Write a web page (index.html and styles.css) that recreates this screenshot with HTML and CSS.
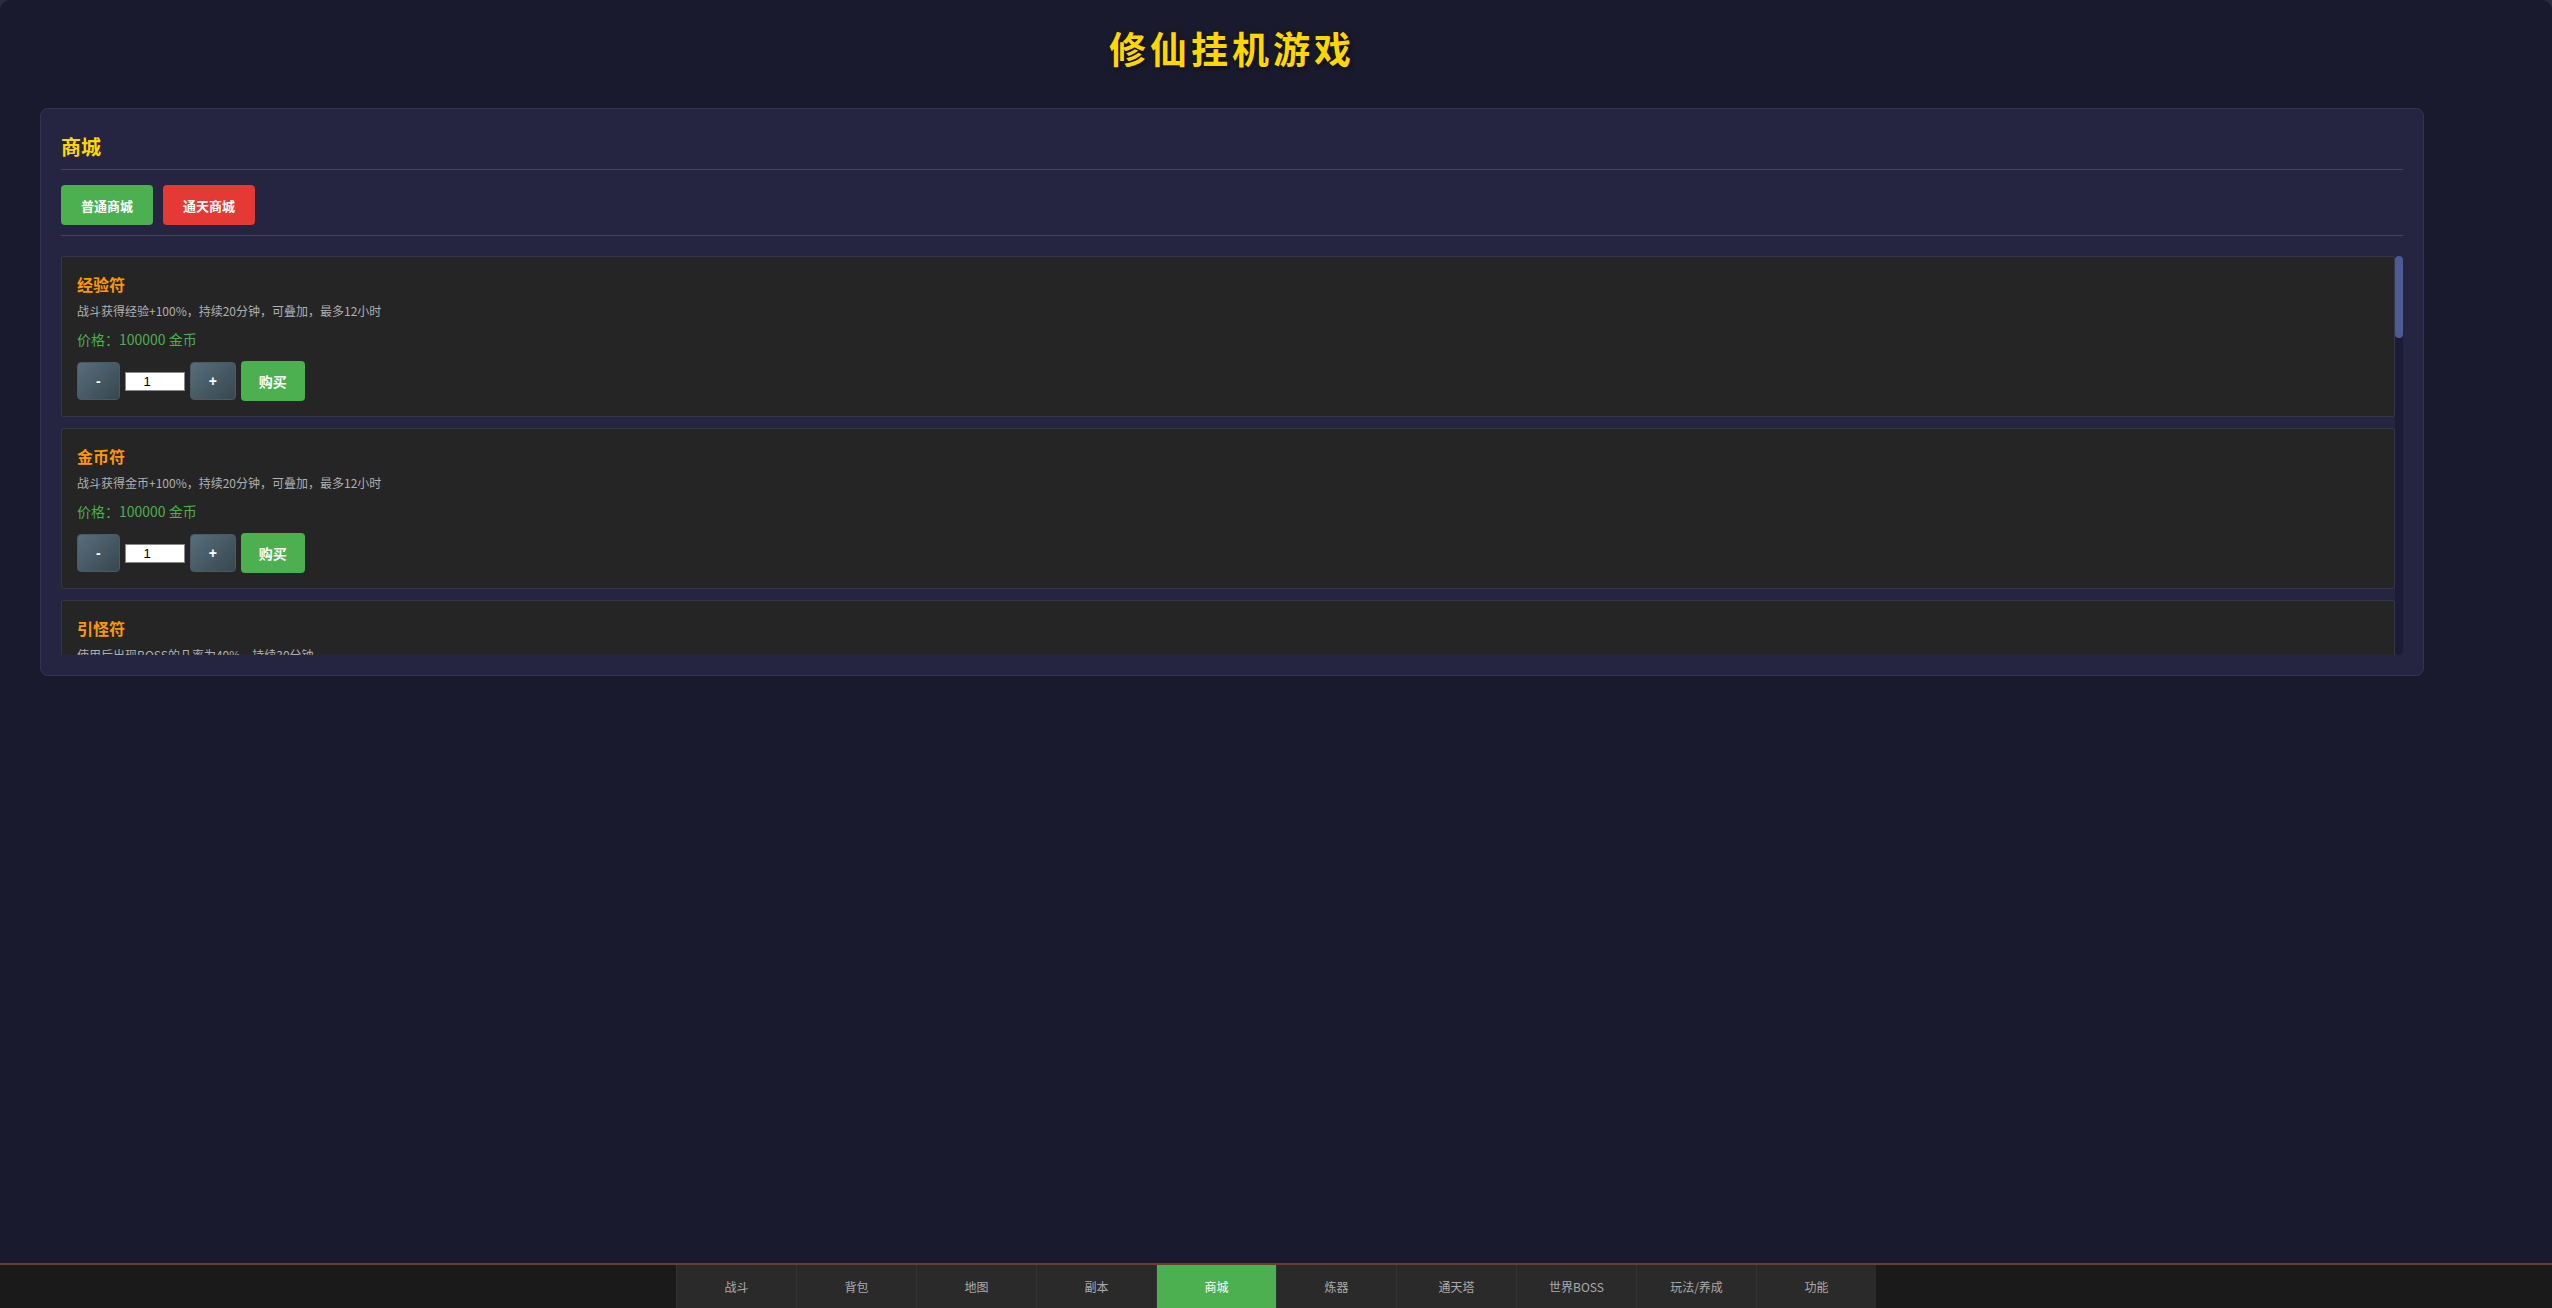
FILE: index.html
```html
<!DOCTYPE html>
<html lang="zh-CN">
  <head>
    <meta charset="UTF-8" />
    <meta name="viewport" content="width=device-width, initial-scale=1.0" />
    <title>修仙挂机游戏</title>
    <link rel="stylesheet" href="styles.css">
  </head>
  <body>
    <div class="app">
      <div class="main">
        <h1 class="game-title">修仙挂机游戏</h1>

        <div class="panel">
          <h2 class="panel-title">商城</h2>

          <div class="shop-tabs">
            <button class="shop-tab normal">普通商城</button>
            <button class="shop-tab tower">通天商城</button>
          </div>

          <div class="shop-scroll">
            <div class="shop-list">
              <div class="shop-item">
                <h3 class="item-name">经验符</h3>
                <p class="item-desc">战斗获得经验+100%，持续20分钟，可叠加，最多12小时</p>
                <p class="item-price">价格：100000 金币</p>
                <div class="item-actions">
                  <button class="qty-btn">-</button>
                  <input class="qty-input" type="number" value="1" min="1">
                  <button class="qty-btn">+</button>
                  <button class="buy-btn">购买</button>
                </div>
              </div>
              <div class="shop-item">
                <h3 class="item-name">金币符</h3>
                <p class="item-desc">战斗获得金币+100%，持续20分钟，可叠加，最多12小时</p>
                <p class="item-price">价格：100000 金币</p>
                <div class="item-actions">
                  <button class="qty-btn">-</button>
                  <input class="qty-input" type="number" value="1" min="1">
                  <button class="qty-btn">+</button>
                  <button class="buy-btn">购买</button>
                </div>
              </div>
              <div class="shop-item">
                <h3 class="item-name">引怪符</h3>
                <p class="item-desc">使用后出现BOSS的几率为40%，持续30分钟</p>
                <p class="item-price">价格：200000 金币</p>
                <div class="item-actions">
                  <button class="qty-btn">-</button>
                  <input class="qty-input" type="number" value="1" min="1">
                  <button class="qty-btn">+</button>
                  <button class="buy-btn">购买</button>
                </div>
              </div>
            </div>
            <!-- 列表滚动条 -->
            <div class="scroll-track">
              <div class="scroll-thumb"></div>
            </div>
          </div>
        </div>
      </div>
    </div>

    <!-- 底部导航 -->
    <nav class="bottom-nav">
      <div class="nav-tabs">
        <button class="nav-tab">战斗</button>
        <button class="nav-tab">背包</button>
        <button class="nav-tab">地图</button>
        <button class="nav-tab">副本</button>
        <button class="nav-tab active">商城</button>
        <button class="nav-tab">炼器</button>
        <button class="nav-tab">通天塔</button>
        <button class="nav-tab">世界BOSS</button>
        <button class="nav-tab">玩法/养成</button>
        <button class="nav-tab">功能</button>
      </div>
    </nav>
  </body>
</html>
```

FILE: styles.css
```css
html {
  background: #2b2b3c;
}

body {
  margin: 0;
  font-family: "Noto Sans CJK SC", "Liberation Sans", sans-serif;
  color: #ddd;
}

button {
  font-family: inherit;
  cursor: pointer;
}

.app {
  min-height: 100vh;
  background-color: #1a1a2e;
  border-radius: 10px 10px 0 0;
  padding-top: 22px;
  box-sizing: border-box;
}

.main {
  width: 2384px;
  margin-left: 40px;
}

.game-title {
  margin: 0 0 34px;
  text-align: center;
  font-size: 37px;
  line-height: 52px;
  letter-spacing: 4px;
  color: #ffd700;
  text-shadow: 2px 2px 4px rgba(0, 0, 0, 0.5);
}

.panel {
  background-color: #252542;
  border: 1px solid #34344f;
  border-radius: 8px;
  padding: 20px;
}

.panel-title {
  margin: 0;
  padding: 4px 0 8px;
  font-size: 20px;
  line-height: 28px;
  color: #ffd700;
  border-bottom: 1px solid #44445e;
}

.shop-tabs {
  display: flex;
  gap: 10px;
  margin-top: 15px;
  padding-bottom: 10px;
  margin-bottom: 20px;
  border-bottom: 1px solid #44445e;
}

.shop-tab {
  height: 40px;
  padding: 0 20px;
  border: none;
  border-radius: 4px;
  font-size: 13px;
  font-weight: bold;
  color: white;
}

.shop-tab.normal {
  background-color: #4caf50;
}

.shop-tab.tower {
  background-color: #e53935;
}

.shop-scroll {
  display: flex;
  height: 399px;
}

.shop-list {
  flex: 1;
  overflow: hidden;
}

.scroll-track {
  width: 8px;
  background: #1c1c36;
  border-radius: 4px;
}

.scroll-thumb {
  height: 82px;
  background: #4c5a96;
  border-radius: 4px;
}

.shop-item {
  background-color: #252525;
  border: 1px solid #363648;
  border-radius: 2px;
  padding: 15px;
  margin-bottom: 11px;
}

.item-name {
  margin: 0 0 6px;
  font-size: 16px;
  line-height: 24px;
  color: #ff9800;
}

.item-desc {
  margin: 0 0 9px;
  font-size: 12px;
  line-height: 18px;
  color: #b0b0b0;
}

.item-price {
  margin: 0 0 12px;
  font-size: 14px;
  line-height: 20px;
  color: #4caf50;
}

.item-actions {
  display: flex;
  align-items: center;
  gap: 5px;
}

.qty-btn {
  height: 38px;
  padding: 0 18px;
  background: linear-gradient(135deg, #566e7b, #37474f);
  border: 1px solid #4b5a63;
  border-radius: 4px;
  color: white;
  font-family: "Liberation Sans", sans-serif;
  font-size: 14px;
  font-weight: bold;
}

.qty-input {
  width: 60px;
  height: 19px;
  box-sizing: border-box;
  padding: 0 2px;
  border: 1px solid #888;
  font-family: "Liberation Sans", sans-serif;
  font-size: 13px;
  text-align: center;
  background: white;
  color: #000;
}

.buy-btn {
  height: 40px;
  padding: 0 18px;
  background-color: #4caf50;
  border: none;
  border-radius: 4px;
  color: white;
  font-size: 14px;
  font-weight: bold;
}

.bottom-nav {
  position: fixed;
  left: 0;
  right: 0;
  bottom: 0;
  height: 43px;
  background-color: #1a1a1a;
  border-top: 2px solid #6b3f24;
  display: flex;
  justify-content: center;
}

.nav-tabs {
  display: flex;
}

.nav-tab {
  width: 120px;
  height: 43px;
  background-color: #2a2a2a;
  border: none;
  border-left: 1px solid #333;
  color: #aaa;
  font-size: 12px;
}

.nav-tab.active {
  background-color: #4caf50;
  color: white;
}
```
